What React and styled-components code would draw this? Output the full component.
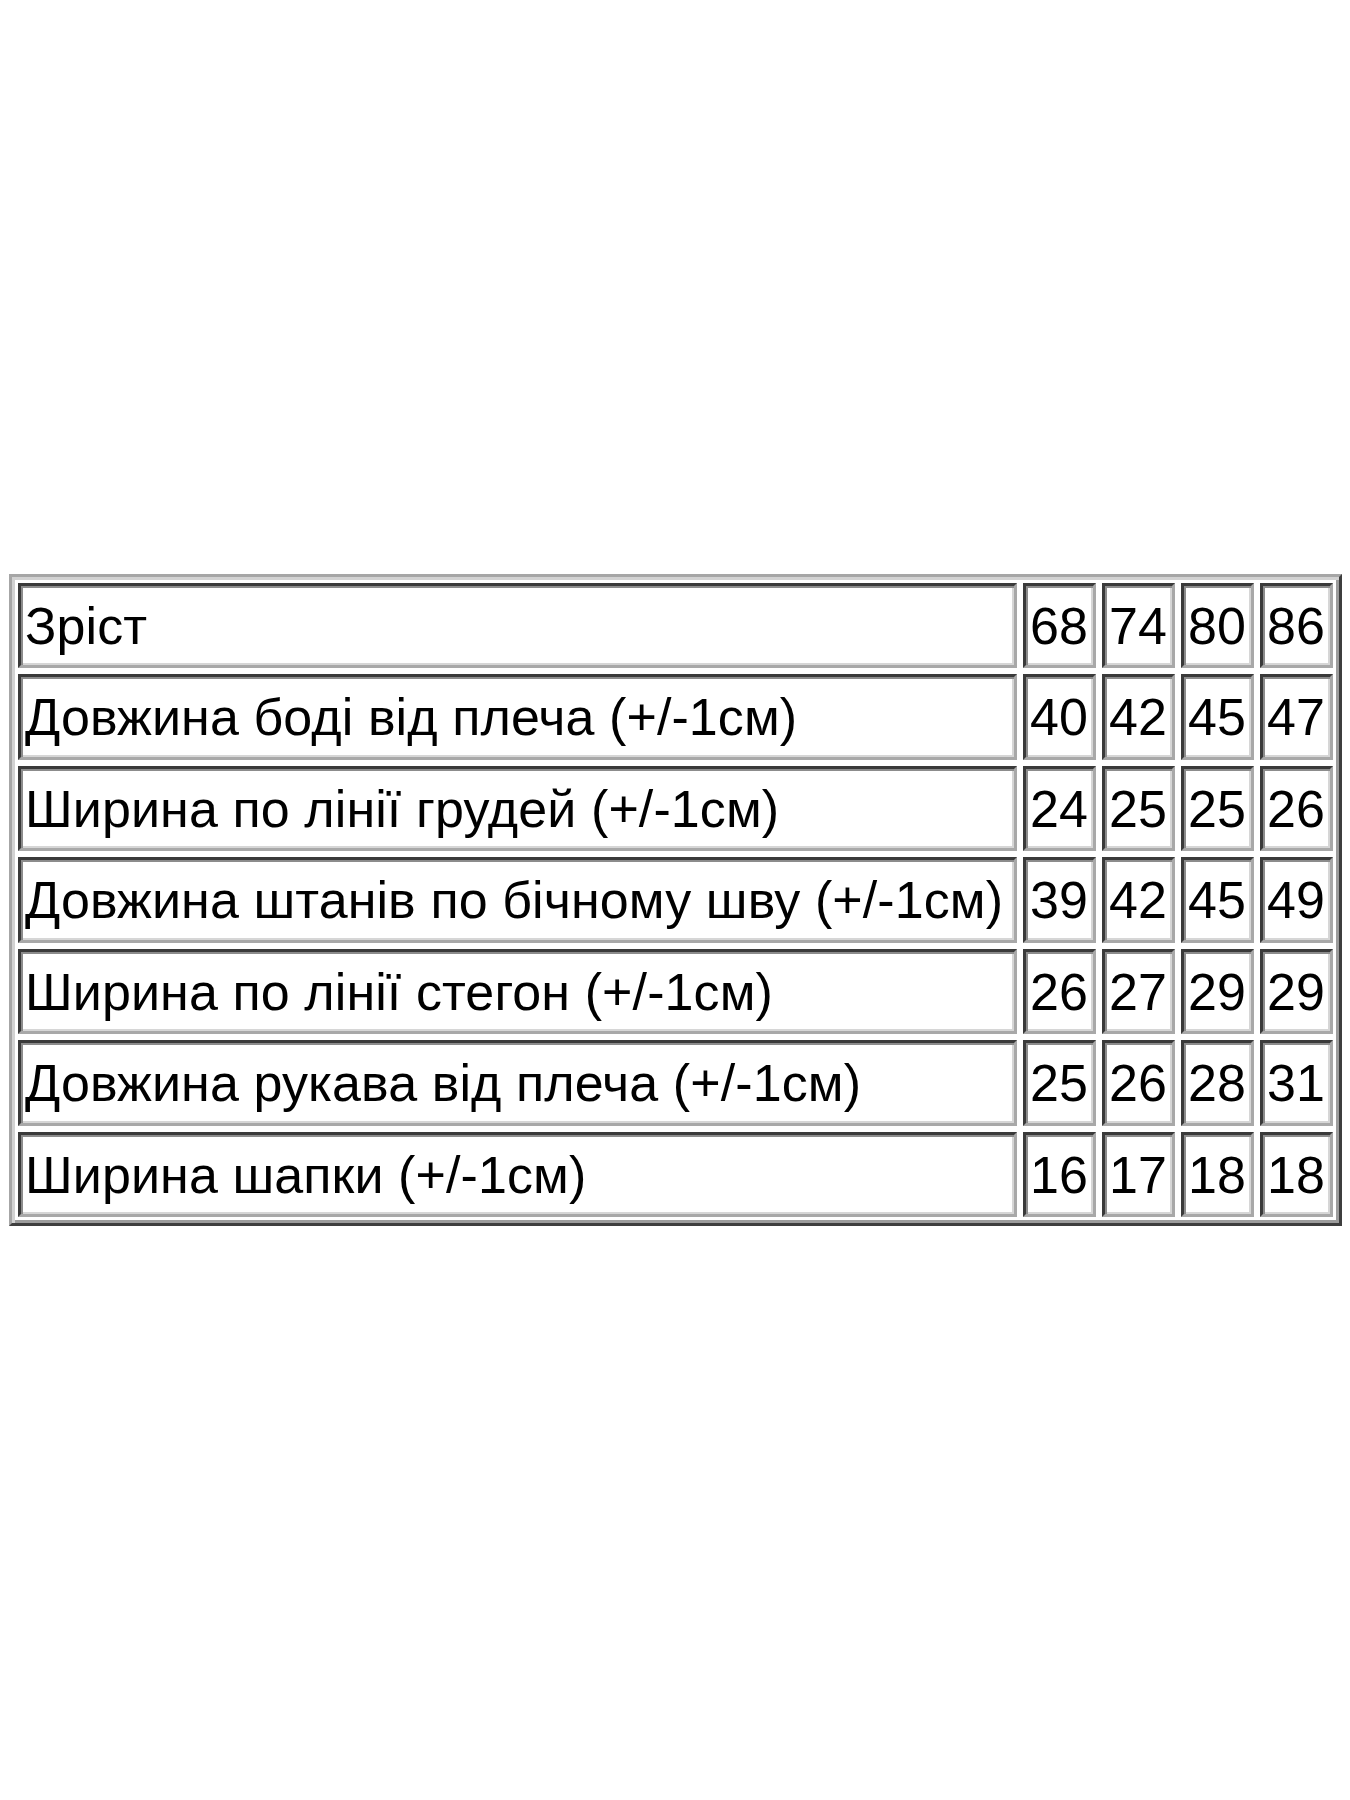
import React from "react";
import styled, { createGlobalStyle } from "styled-components";

const Global = createGlobalStyle`
  html, body {
    margin: 0;
    padding: 0;
    background: #fff;
  }
`;

const Page = styled.div`
  height: 1800px;
  display: flex;
  align-items: center;
  padding: 0 8px 0 9px;
  box-sizing: border-box;
`;

const SizeTable = styled.table`
  width: 1333px;
  border-collapse: separate;
  border-spacing: 6px;
  border: 3px solid;
  border-color: #a6a6a6 #3e3e3e #3e3e3e #a6a6a6;
  box-shadow: inset 3px 3px 0 #d2d2d2, inset -3px -3px 0 #9c9c9c;
  font-family: "Liberation Sans", Arial, sans-serif;
  font-size: 52px;
  color: #000;
`;

const Cell = styled.td`
  height: 85.5px;
  box-sizing: border-box;
  padding: 0 4px;
  border: 3px solid;
  border-color: #3a3a3a #a8a8a8 #a8a8a8 #3a3a3a;
  box-shadow: inset 2px 2px 0 #8c8c8c, inset -2px -2px 0 #d6d6d6;
  white-space: nowrap;
  vertical-align: middle;
  line-height: 1;
  letter-spacing: 0.1px;
  width: ${(p) => (p.$num ? "73px" : "auto")};
  text-align: left;
`;

const rows = [
  ["Зріст", "68", "74", "80", "86"],
  ["Довжина боді від плеча (+/-1см)", "40", "42", "45", "47"],
  ["Ширина по лінії грудей (+/-1см)", "24", "25", "25", "26"],
  ["Довжина штанів по бічному шву (+/-1см)", "39", "42", "45", "49"],
  ["Ширина по лінії стегон (+/-1см)", "26", "27", "29", "29"],
  ["Довжина рукава від плеча (+/-1см)", "25", "26", "28", "31"],
  ["Ширина шапки (+/-1см)", "16", "17", "18", "18"],
];

export default function App() {
  return (
    <>
      <Global />
      <Page>
        <SizeTable>
          <tbody>
            {rows.map((r) => (
              <tr key={r[0]}>
                <Cell>{r[0]}</Cell>
                {r.slice(1).map((v, i) => (
                  <Cell $num key={i}>
                    {v}
                  </Cell>
                ))}
              </tr>
            ))}
          </tbody>
        </SizeTable>
      </Page>
    </>
  );
}
